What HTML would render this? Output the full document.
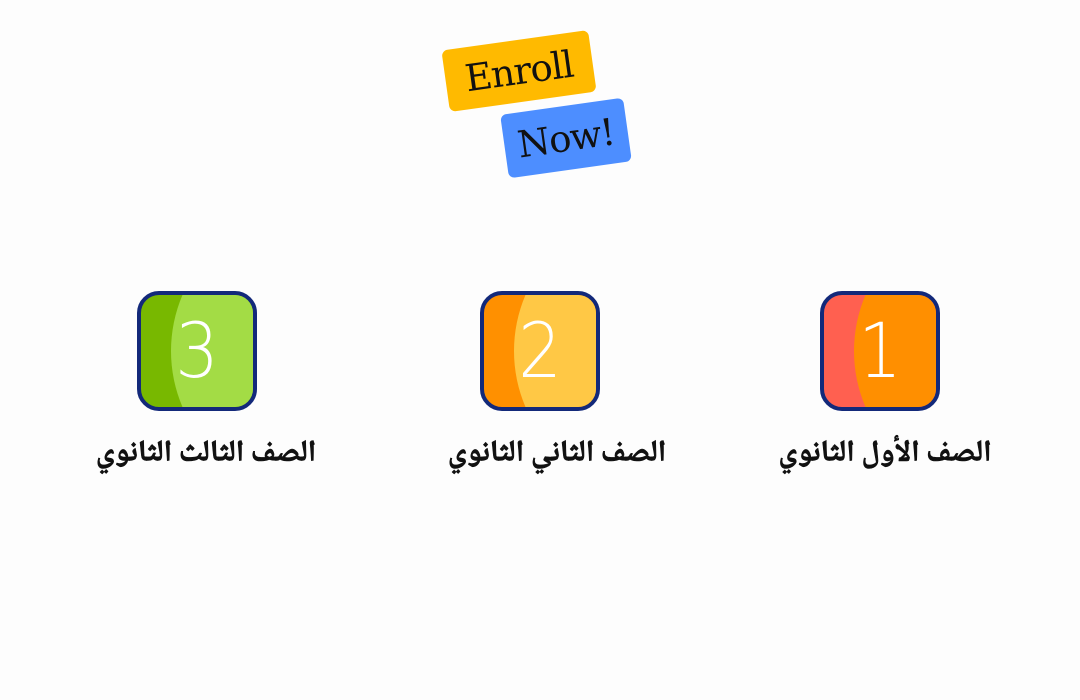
<!DOCTYPE html>
<html><head><meta charset="utf-8"><style>
body{margin:0;width:1080px;height:700px;background:#fdfdfd;position:relative;overflow:hidden;font-family:"DejaVu Serif","Liberation Serif",serif}
.tag{position:absolute;border-radius:6px;color:#111;font-size:37px;display:flex;align-items:center;justify-content:center;transform:rotate(-8deg);letter-spacing:-1px}
.box{position:absolute;top:291px;width:112px;height:112px;border:4px solid #13297a;border-radius:22px;overflow:hidden}
.box .r{position:absolute;left:30px;top:-90px;width:300px;height:292px;border-radius:50%}
.box span{position:absolute;left:0;right:0;top:8px;text-align:center;color:#fff;font:200 76px "DejaVu Sans","Liberation Sans",sans-serif;line-height:96px;transform:scaleX(0.9)}
.t{position:absolute;top:430px;width:300px;text-align:center;font:bold 30px "Noto Naskh Arabic","DejaVu Sans",sans-serif;color:#111;direction:rtl;letter-spacing:0.5px;-webkit-text-stroke:0.6px #111}
</style></head><body>
<div class="tag" style="left:445px;top:40px;width:148px;height:62px;background:#ffba00">Enroll</div>
<div class="tag" style="left:504px;top:106px;width:124px;height:64px;background:#4d8eff">Now!</div>

<div class="box" style="left:820px;background:#ff6050"><div class="r" style="background:#ff8f00"></div><span>1</span></div>
<div class="box" style="left:480px;background:#ff9000"><div class="r" style="background:#ffc845"></div><span>2</span></div>
<div class="box" style="left:137px;background:#78b800"><div class="r" style="background:#a3dc45"></div><span>3</span></div>

<div class="t" style="left:735px">الصف الأول الثانوي</div>
<div class="t" style="left:407px">الصف الثاني الثانوي</div>
<div class="t" style="left:56px">الصف الثالث الثانوي</div>
</body></html>
